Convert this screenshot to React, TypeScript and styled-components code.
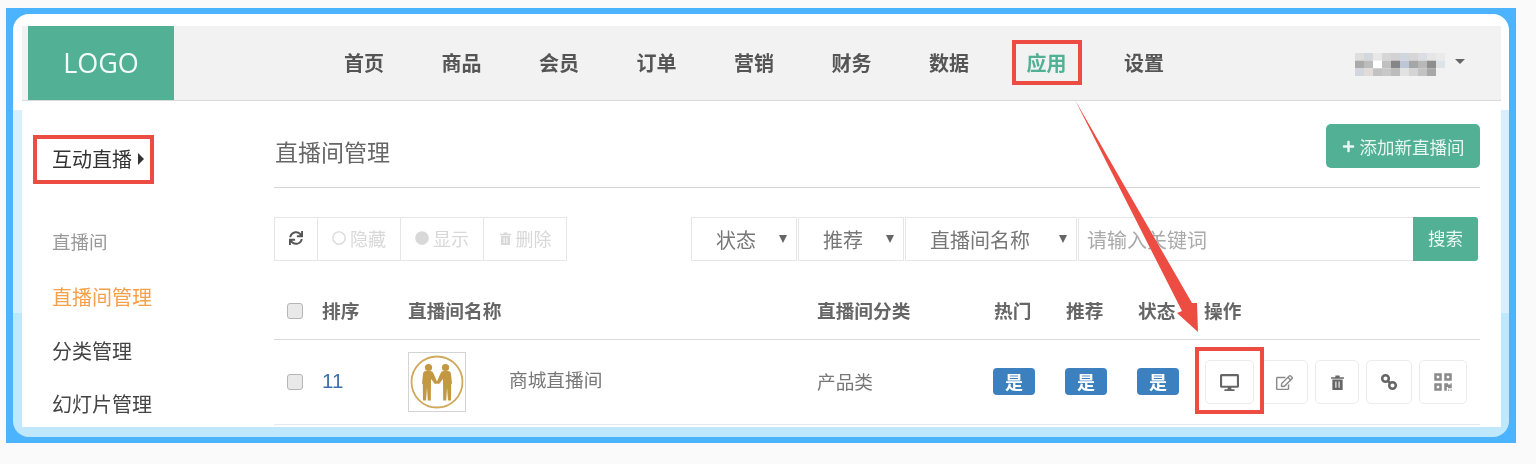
import styled, { createGlobalStyle, css } from "styled-components";
import { FaSync, FaRegCircle, FaCircle, FaPlus, FaDesktop, FaRegEdit, FaQrcode } from "react-icons/fa";

const GlobalStyle = createGlobalStyle`
  html, body {
    margin: 0;
    padding: 0;
    background: #fafafa;
    font-family: "Noto Sans CJK SC", "Liberation Sans", sans-serif;
  }
`;

const redBox = css`
  content: "";
  position: absolute;
  border: 4px solid #ed4c43;
  pointer-events: none;
  z-index: 3;
`;

const Page = styled.div`
  height: 464px;
  box-sizing: border-box;
  padding: 8px 0 0 6px;
  overflow: hidden;
`;

const Frame = styled.div`
  position: relative;
  width: 1510px;
  height: 435px;
  box-sizing: border-box;
  padding: 6px 7px;
  background: #4cb3fe;
  filter: blur(0.6px);
`;

const Inner = styled.div`
  height: 423px;
  box-sizing: border-box;
  padding: 12px 8px 9px 9px;
  border-radius: 16px;
  background: linear-gradient(#fff 96px, #d8f0fe 96px, #d8f0fe 299px, #bfe8fc 299px);
`;

const Panel = styled.div`
  height: 401px;
  background: #fff;
  overflow: hidden;
`;

const Header = styled.header`
  display: flex;
  align-items: center;
  height: 74px;
  padding-left: 6px;
  padding-right: 36px;
  background: #f2f2f2;
  border-bottom: 1px solid #d9d9d9;
`;

const Logo = styled.div`
  display: flex;
  align-items: center;
  justify-content: center;
  width: 146px;
  height: 74px;
  padding-bottom: 2px;
  box-sizing: border-box;
  background: #52b095;
  color: #f2fbf8;
  font-family: "Open Sans", "Liberation Sans", sans-serif;
  font-size: 27px;
`;

const Nav = styled.nav`
  display: flex;
  gap: 57.5px;
  margin-left: 170px;
`;

const NavItem = styled.a<{ $active?: boolean }>`
  position: relative;
  font-size: 20px;
  line-height: 28px;
  font-weight: 700;
  color: ${(p) => (p.$active ? "#52b095" : "#555")};

  ${(p) =>
    p.$active &&
    css`
      &::after {
        ${redBox}
        top: -9px;
        bottom: -8px;
        left: -15px;
        right: -15px;
      }
    `}
`;

const User = styled.div`
  display: flex;
  align-items: center;
  gap: 10px;
  margin-left: auto;
  margin-top: 2px;
`;

const Caret = styled.span`
  width: 0;
  height: 0;
  margin-top: -6px;
  border-left: 5px solid transparent;
  border-right: 5px solid transparent;
  border-top: 5px solid #666;
`;

const Body = styled.div`
  display: flex;
`;

const Sidebar = styled.aside`
  width: 252px;
  flex-shrink: 0;
  box-sizing: border-box;
  padding: 44px 0 0 30px;
  font-size: 20px;
  line-height: 28px;
  color: #444;
`;

const SideTitle = styled.div`
  position: relative;
  display: flex;
  align-items: center;
  gap: 6px;
  width: 94px;
  color: #333;

  &::before {
    ${redBox}
    top: -10px;
    bottom: -11px;
    left: -19px;
    right: -8px;
  }
`;

const SideArrow = styled.span`
  width: 0;
  height: 0;
  border-top: 6px solid transparent;
  border-bottom: 6px solid transparent;
  border-left: 6px solid #333;
`;

const SideGroup = styled.div`
  margin-top: 54px;
  margin-bottom: 28px;
  font-size: 18.5px;
  color: #999;
`;

const SideItem = styled.div<{ $current?: boolean }>`
  height: 53.5px;
  color: ${(p) => (p.$current ? "#f7a04b" : "#444")};
`;

const Main = styled.main`
  width: 1206px;
`;

const TitleRow = styled.div`
  display: flex;
  align-items: center;
  justify-content: space-between;
  padding: 23px 0 19px;
  border-bottom: 1px solid #d5d5d5;
`;

const Title = styled.h1`
  margin: 10px 0 0 1px;
  font-size: 23px;
  font-weight: 400;
  color: #666;
`;

const AddButton = styled.button`
  display: flex;
  align-items: center;
  justify-content: center;
  gap: 5px;
  height: 44px;
  width: 154px;
  border: 0;
  border-radius: 5px;
  background: #52b095;
  color: #e8f7f2;
  font: inherit;
  font-size: 17.5px;
`;

const Toolbar = styled.div`
  display: flex;
  justify-content: space-between;
  margin-top: 29px;
  height: 44px;
`;

const ToolGroup = styled.div`
  display: flex;
`;

const ToolButton = styled.div<{ $w: number; $enabled?: boolean }>`
  display: flex;
  align-items: center;
  justify-content: center;
  gap: 4px;
  width: ${(p) => p.$w}px;
  box-sizing: border-box;
  padding-bottom: 2px;
  border: 1px solid #e6e6e6;
  margin-left: -1px;
  font-size: 18px;
  color: ${(p) => (p.$enabled ? "#555" : "#d8d8d8")};

  &:first-child {
    margin-left: 0;
  }
`;

const SearchGroup = styled.div`
  display: flex;
  margin-right: 2px;
`;

const Select = styled.div<{ $w: number }>`
  position: relative;
  display: flex;
  align-items: center;
  width: ${(p) => p.$w}px;
  box-sizing: border-box;
  padding-left: 24px;
  padding-top: 1px;
  border: 1px solid #e6e6e6;
  margin-right: 1px;
  font-size: 20px;
  color: #777;
`;

const SelectCaret = styled.span`
  position: absolute;
  right: 9px;
  top: 17px;
  width: 0;
  height: 0;
  border-left: 4px solid transparent;
  border-right: 4px solid transparent;
  border-top: 8px solid #666;
`;

const SearchInput = styled.div`
  display: flex;
  align-items: center;
  width: 335px;
  box-sizing: border-box;
  padding-left: 8px;
  padding-top: 1px;
  border: 1px solid #e6e6e6;
  border-right: 0;
  font-size: 20px;
  color: #aaa;
`;

const SearchButton = styled.div`
  display: flex;
  align-items: center;
  justify-content: center;
  width: 65px;
  padding-bottom: 3px;
  box-sizing: border-box;
  border-radius: 0 3px 3px 0;
  background: #52b095;
  color: #eaf8f4;
  font-size: 17.5px;
`;

const columns = "48px 86px 409px 177px 72px 72px 66px 1fr";

const TableHead = styled.div`
  display: grid;
  grid-template-columns: ${columns};
  align-items: center;
  height: 56px;
  margin-top: 22px;
  border-bottom: 1px solid #d9d9d9;
  font-size: 18.7px;
  font-weight: 700;
  color: #666;
`;

const HeadCell = styled.span`
  margin-bottom: 4px;
`;

const TableRow = styled.div`
  display: grid;
  grid-template-columns: ${columns};
  align-items: center;
  height: 84px;
  border-bottom: 1px solid #e8e8e8;
  font-size: 18.7px;
  color: #777;
`;

const Check = styled.span`
  display: block;
  width: 16px;
  height: 16px;
  margin-left: 13px;
  box-sizing: border-box;
  border: 1px solid #b5b5b5;
  border-radius: 3px;
  background: #e9e9e9;
`;

const Sort = styled.span`
  margin-bottom: 2px;
  font-family: "Liberation Sans", sans-serif;
  font-size: 20.5px;
  color: #3f6fb0;
`;

const NameCell = styled.div`
  display: flex;
  align-items: center;
  gap: 43px;
`;

const RoomName = styled.span`
  margin-bottom: 8px;
`;

const Category = styled.span`
  margin-bottom: 4px;
`;

const Thumb = styled.div`
  display: flex;
  align-items: center;
  justify-content: center;
  width: 58px;
  height: 60px;
  box-sizing: border-box;
  border: 1px solid #d4d4d4;
  background: #fff;
`;

const Badge = styled.span`
  display: flex;
  align-items: center;
  justify-content: center;
  width: 42px;
  height: 27px;
  margin-left: -1px;
  margin-bottom: 2px;
  border-radius: 4px;
  background: #3c80c0;
  color: #fff;
  font-size: 18px;
  font-weight: 700;
`;

const Ops = styled.div`
  display: flex;
  gap: 7px;
  margin-left: 1px;
`;

const OpButton = styled.div<{ $w: number; $marked?: boolean; $soft?: boolean }>`
  position: relative;
  display: flex;
  align-items: center;
  justify-content: center;
  width: ${(p) => p.$w}px;
  height: 44px;
  box-sizing: border-box;
  border: 1px solid #ececec;
  border-radius: 5px;
  background: #fff;
  color: ${(p) => (p.$soft ? "#8a8a8a" : "#666")};

  ${(p) =>
    p.$marked &&
    css`
      &::after {
        ${redBox}
        top: -14px;
        bottom: -11px;
        left: -11px;
        right: -11px;
      }
    `}
`;

const Arrow = styled.svg`
  position: absolute;
  left: 0;
  top: 0;
  z-index: 4;
  pointer-events: none;
`;

const mosaic = [
  "#dedede #d4d8dc #e8e8e8 #d6d6d6 #d2d2d2 #d0d6de #d6d6d6 #dadde2 #e6e6e6 #eaeaea",
  "#aaaaaa #bcbcbc #ffffff #c0c0c0 #868686 #bcc6d6 #a6a6a6 #b8b8b8 #8e8e8e #dfe3e8",
  "#d2d6de #e0dcda #c2c2c2 #c8c8c8 #bcbcbc #e2e2e2 #d4d4d4 #c2c2c2 #a8a8a8 #f2f2f2",
];

function BlurredName() {
  return (
    <svg width={90} height={23} aria-hidden="true">
      {mosaic.map((row, y) =>
        row.split(" ").map((fill, x) => (
          <rect key={`${x}-${y}`} x={x * 9} y={y * 7.67} width={9} height={7.67} fill={fill} />
        ))
      )}
    </svg>
  );
}

function HandshakeLogo() {
  return (
    <svg width={54} height={54} viewBox="0 0 54 54" aria-hidden="true">
      <circle cx={27} cy={27} r={25.500} fill="none" stroke="#cfa95c" strokeWidth={1.800} />
      <g fill="#c39840">
        <circle cx={18.500} cy={12.500} r={3.600} />
        <circle cx={35.500} cy={12.500} r={3.600} />
        <path d="M13 19c0-2 1.500-3 3-3h4c2 0 3 1 3.500 2.500l3.500 8 0 2-2 .5-4-5-.2 21.500h-3l-.8-13-1 13h-3l-.2-16.500-.8-.5z" />
        <path d="M41 19c0-2-1.500-3-3-3h-4c-2 0-3 1-3.500 2.500l-3.500 8 0 2 2 .5 4-5 .2 21.500h3l.8-13 1 13h3l.2-16.500.8-.5z" />
      </g>
    </svg>
  );
}

function TrashIcon({ size }: { size: number }) {
  return (
    <svg width={size} height={size} viewBox="0 0 14 14" fill="currentColor" aria-hidden="true">
      <path d="M1 2h12v1.500H1zM5 .5h4V2H5zM2.200 4.200h9.600V14H2.200zM5 6v6h1V6zm3 0v6h1V6z" fillRule="evenodd" />
    </svg>
  );
}

function LinkIcon() {
  return (
    <svg width={20} height={20} viewBox="0 0 20 20" fill="none" stroke="currentColor" strokeWidth={2.500} aria-hidden="true">
      <circle cx={6.500} cy={6.500} r={3.300} />
      <circle cx={13.500} cy={13.500} r={3.300} />
      <path d="M8.500 8.500l3 3" />
    </svg>
  );
}

const navItems = ["首页", "商品", "会员", "订单", "营销", "财务", "数据", "应用", "设置"];

export default function App() {
  return (
    <Page>
      <GlobalStyle />
      <Frame>
        <Inner>
          <Panel>
            <Header>
              <Logo>LOGO</Logo>
              <Nav>
                {navItems.map((item) => (
                  <NavItem key={item} $active={item === "应用"}>
                    {item}
                  </NavItem>
                ))}
              </Nav>
              <User>
                <BlurredName />
                <Caret />
              </User>
            </Header>
            <Body>
              <Sidebar>
                <SideTitle>
                  互动直播
                  <SideArrow />
                </SideTitle>
                <SideGroup>直播间</SideGroup>
                <SideItem $current>直播间管理</SideItem>
                <SideItem>分类管理</SideItem>
                <SideItem>幻灯片管理</SideItem>
              </Sidebar>
              <Main>
                <TitleRow>
                  <Title>直播间管理</Title>
                  <AddButton>
                    <FaPlus size={13} />
                    添加新直播间
                  </AddButton>
                </TitleRow>
                <Toolbar>
                  <ToolGroup>
                    <ToolButton $w={44} $enabled>
                      <FaSync size={14} />
                    </ToolButton>
                    <ToolButton $w={84}>
                      <FaRegCircle size={14} />
                      隐藏
                    </ToolButton>
                    <ToolButton $w={84}>
                      <FaCircle size={14} />
                      显示
                    </ToolButton>
                    <ToolButton $w={84}>
                      <TrashIcon size={13} />
                      删除
                    </ToolButton>
                  </ToolGroup>
                  <SearchGroup>
                    <Select $w={106}>
                      状态
                      <SelectCaret />
                    </Select>
                    <Select $w={106}>
                      推荐
                      <SelectCaret />
                    </Select>
                    <Select $w={172}>
                      直播间名称
                      <SelectCaret />
                    </Select>
                    <SearchInput>请输入关键词</SearchInput>
                    <SearchButton>搜索</SearchButton>
                  </SearchGroup>
                </Toolbar>
                <TableHead>
                  <Check />
                  <HeadCell>排序</HeadCell>
                  <HeadCell>直播间名称</HeadCell>
                  <HeadCell>直播间分类</HeadCell>
                  <HeadCell>热门</HeadCell>
                  <HeadCell>推荐</HeadCell>
                  <HeadCell>状态</HeadCell>
                  <HeadCell>操作</HeadCell>
                </TableHead>
                <TableRow>
                  <Check />
                  <Sort>11</Sort>
                  <NameCell>
                    <Thumb>
                      <HandshakeLogo />
                    </Thumb>
                    <RoomName>商城直播间</RoomName>
                  </NameCell>
                  <Category>产品类</Category>
                  <Badge>是</Badge>
                  <Badge>是</Badge>
                  <Badge>是</Badge>
                  <Ops>
                    <OpButton $w={49} $marked>
                      <FaDesktop size={19} />
                    </OpButton>
                    <OpButton $w={47} $soft>
                      <FaRegEdit size={17} />
                    </OpButton>
                    <OpButton $w={44}>
                      <TrashIcon size={15} />
                    </OpButton>
                    <OpButton $w={46}>
                      <LinkIcon />
                    </OpButton>
                    <OpButton $w={48} $soft>
                      <FaQrcode size={20} />
                    </OpButton>
                  </Ops>
                </TableRow>
              </Main>
            </Body>
          </Panel>
        </Inner>
        <Arrow width={1510} height={435} aria-hidden="true">
          <polygon points="1069,92 1186,295 1191,295 1192,324 1171,305 1176,303" fill="#ed4c43" />
        </Arrow>
      </Frame>
    </Page>
  );
}
